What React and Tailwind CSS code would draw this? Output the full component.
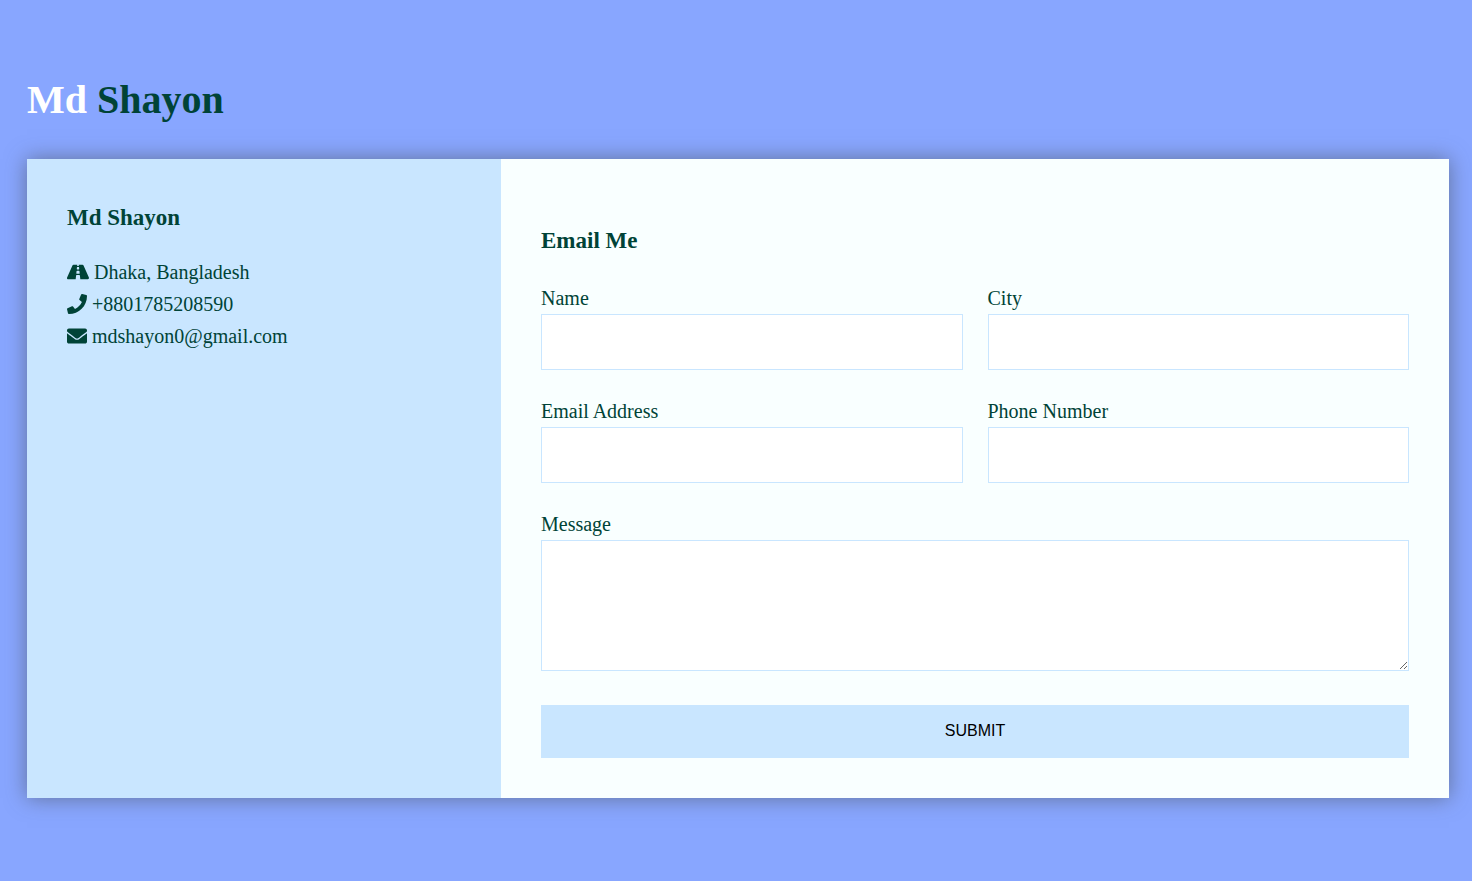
import { FaRoad, FaPhone, FaEnvelope } from 'react-icons/fa';

const contacts = [
  { icon: FaRoad, text: 'Dhaka, Bangladesh', size: 'w-[22px]' },
  { icon: FaPhone, text: '+8801785208590', size: 'w-5' },
  { icon: FaEnvelope, text: 'mdshayon0@gmail.com', size: 'w-5' },
];

const fields = [
  { id: 'name', label: 'Name', type: 'text' },
  { id: 'city', label: 'City', type: 'text' },
  { id: 'email', label: 'Email Address', type: 'email' },
  { id: 'phone', label: 'Phone Number', type: 'tel' },
];

const control =
  'block w-full rounded-none border border-[#c9e6ff] bg-white px-4 font-["Liberation_Sans",sans-serif] text-base text-black';

export default function App() {
  return (
    <div className="min-h-screen bg-[#88a6ff] pt-[68px] pr-[23px] pb-[83px] pl-[27px] font-['Liberation_Serif',serif] text-xl leading-8 text-[#004337]">
      <h1 className="mb-[27px] text-[40px] leading-16 font-bold">
        <span className="text-white">Md</span> Shayon
      </h1>

      <main className="grid grid-cols-1 shadow-[0_0_20px_0_rgba(72,78,85,0.6)] md:grid-cols-[1fr_2fr]">
        <section className="bg-[#c9e6ff] p-10">
          <h2 className="mb-5 text-[23px] leading-[37px] font-bold">Md Shayon</h2>
          <ul>
            {contacts.map(({ icon: Icon, text, size }) => (
              <li key={text} className="flex items-center gap-[5px]">
                <Icon className={`h-5 ${size}`} aria-hidden="true" />
                <span>{text}</span>
              </li>
            ))}
          </ul>
        </section>

        <section className="bg-[#f9ffff] px-10 pt-[63px] pb-10">
          <h2 className="mb-[23px] text-[23px] leading-[37px] font-bold">Email Me</h2>
          <form className="grid grid-cols-1 gap-[25px] md:grid-cols-2" onSubmit={(e) => e.preventDefault()}>
            {fields.map(({ id, label, type }) => (
              <div key={id}>
                <label htmlFor={id} className="block">{label}</label>
                <input id={id} name={id} type={type} className={`h-14 ${control}`} />
              </div>
            ))}
            <div className="pb-[9px] md:col-span-2">
              <label htmlFor="message" className="block">Message</label>
              <textarea id="message" name="message" className={`h-[131px] resize py-4 ${control}`} />
            </div>
            <button
              type="submit"
              className="h-[53px] w-full bg-[#c9e6ff] pb-0.5 font-['Liberation_Sans',sans-serif] text-base text-black uppercase md:col-span-2"
            >
              Submit
            </button>
          </form>
        </section>
      </main>
    </div>
  );
}
